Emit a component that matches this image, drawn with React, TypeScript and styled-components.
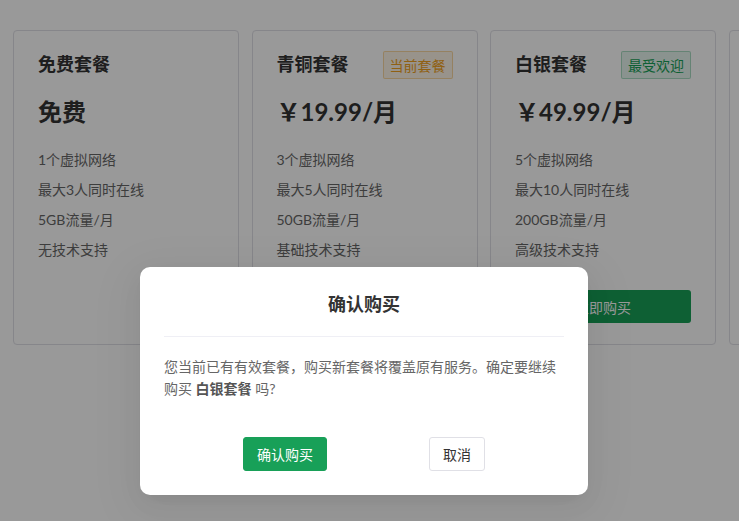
import React from "react";
import styled, { createGlobalStyle } from "styled-components";

const Global = createGlobalStyle`
  html, body { margin: 0; padding: 0; }
  body {
    width: 739px; height: 521px; overflow: hidden; background: #fff;
    font-family: Lato, "Noto Sans CJK SC", sans-serif;
    color: #333;
  }
`;

const Page = styled.div`
  position: relative;
  width: 739px;
  height: 521px;
  overflow: hidden;
  box-sizing: border-box;
  padding: 30px 0 0 13px;
`;

const CardRow = styled.div`
  display: flex;
  gap: 12.5px;
  width: 1000px;
  align-items: stretch;
`;

const Card = styled.div`
  flex: 0 0 226px;
  box-sizing: border-box;
  height: 315px;
  border: 1px solid #e0e0e6;
  border-radius: 4px;
  background: #fff;
  padding: 20px 24px 20px 24px;
  display: flex;
  flex-direction: column;
`;

const CardHead = styled.div`
  display: flex;
  align-items: flex-start;
  justify-content: space-between;
  height: 28px;
`;

const PlanName = styled.div`
  font-size: 18px;
  line-height: 26px;
  font-weight: 700;
  color: #333;
`;

const Badge = styled.span<{ $tone: "warn" | "ok" }>`
  box-sizing: border-box;
  height: 28px;
  padding: 0 6px;
  display: inline-flex;
  align-items: center;
  font-size: 14px;
  border-radius: 2px;
  color: ${(p) => (p.$tone === "warn" ? "#f0a020" : "#18a058")};
  background: ${(p) => (p.$tone === "warn" ? "rgba(240,160,32,0.1)" : "rgba(24,160,88,0.1)")};
  border: 1px solid ${(p) => (p.$tone === "warn" ? "rgba(240,160,32,0.35)" : "rgba(24,160,88,0.3)")};
`;

const Price = styled.div`
  margin-top: 17px;
  font-size: 24px;
  line-height: 32px;
  font-weight: 700;
  color: #333;
`;

const Features = styled.ul`
  list-style: none;
  margin: 17px 0 0;
  padding: 0;
`;

const Feature = styled.li`
  font-size: 14px;
  line-height: 30px;
  color: #666;
`;

const BuyButton = styled.button`
  margin-top: 25px;
  height: 33px;
  border: none;
  border-radius: 3px;
  background: #18a058;
  color: #fff;
  font-family: inherit;
  font-size: 14px;
`;

const Overlay = styled.div`
  position: absolute;
  inset: 0;
  background: rgba(0, 0, 0, 0.4);
`;

const Modal = styled.div`
  position: absolute;
  left: 140px;
  top: 267px;
  width: 448px;
  box-sizing: border-box;
  background: #fff;
  border-radius: 10px;
  padding: 24px 24px 24px;
  box-shadow: 0 6px 16px -9px rgba(0, 0, 0, 0.08), 0 9px 28px 0 rgba(0, 0, 0, 0.05),
    0 12px 48px 16px rgba(0, 0, 0, 0.03);
`;

const ModalTitle = styled.div`
  text-align: center;
  font-size: 18px;
  line-height: 26px;
  font-weight: 700;
  color: #333;
  padding-bottom: 19px;
  border-bottom: 1px solid #efeff5;
`;

const ModalBody = styled.p`
  margin: 19px 0 0;
  font-size: 14px;
  line-height: 22px;
  color: #666;
  strong { font-weight: 700; color: #555; }
`;

const Actions = styled.div`
  margin-top: 37px;
  display: flex;
  justify-content: center;
  gap: 102px;
`;

const ActionButton = styled.button<{ $primary?: boolean }>`
  height: 34px;
  box-sizing: border-box;
  padding: 0 13px;
  border-radius: 3px;
  font-family: inherit;
  font-size: 14px;
  border: 1px solid ${(p) => (p.$primary ? "#18a058" : "#e0e0e6")};
  background: ${(p) => (p.$primary ? "#18a058" : "#fff")};
  color: ${(p) => (p.$primary ? "#fff" : "#333")};
`;

type Plan = {
  name: string;
  price: string;
  badge?: { text: string; tone: "warn" | "ok" };
  features: string[];
  buy?: boolean;
};

const plans: Plan[] = [
  { name: "免费套餐", price: "免费", features: ["1个虚拟网络", "最大3人同时在线", "5GB流量/月", "无技术支持"] },
  {
    name: "青铜套餐",
    price: "￥19.99/月",
    badge: { text: "当前套餐", tone: "warn" },
    features: ["3个虚拟网络", "最大5人同时在线", "50GB流量/月", "基础技术支持"],
  },
  {
    name: "白银套餐",
    price: "￥49.99/月",
    badge: { text: "最受欢迎", tone: "ok" },
    features: ["5个虚拟网络", "最大10人同时在线", "200GB流量/月", "高级技术支持"],
    buy: true,
  },
  {
    name: "黄金套餐",
    price: "￥99.99/月",
    features: ["10个虚拟网络", "最大20人同时在线", "500GB流量/月", "专属技术支持"],
    buy: true,
  },
];

export default function App() {
  return (
    <>
      <Global />
      <Page>
        <CardRow>
          {plans.map((p) => (
            <Card key={p.name}>
              <CardHead>
                <PlanName>{p.name}</PlanName>
                {p.badge && <Badge $tone={p.badge.tone}>{p.badge.text}</Badge>}
              </CardHead>
              <Price>{p.price}</Price>
              <Features>
                {p.features.map((f) => (
                  <Feature key={f}>{f}</Feature>
                ))}
              </Features>
              {p.buy && <BuyButton>立即购买</BuyButton>}
            </Card>
          ))}
        </CardRow>
        <Overlay />
        <Modal>
          <ModalTitle>确认购买</ModalTitle>
          <ModalBody>
            您当前已有有效套餐，购买新套餐将覆盖原有服务。确定要继续购买 <strong>白银套餐</strong> 吗?
          </ModalBody>
          <Actions>
            <ActionButton $primary>确认购买</ActionButton>
            <ActionButton>取消</ActionButton>
          </Actions>
        </Modal>
      </Page>
    </>
  );
}
